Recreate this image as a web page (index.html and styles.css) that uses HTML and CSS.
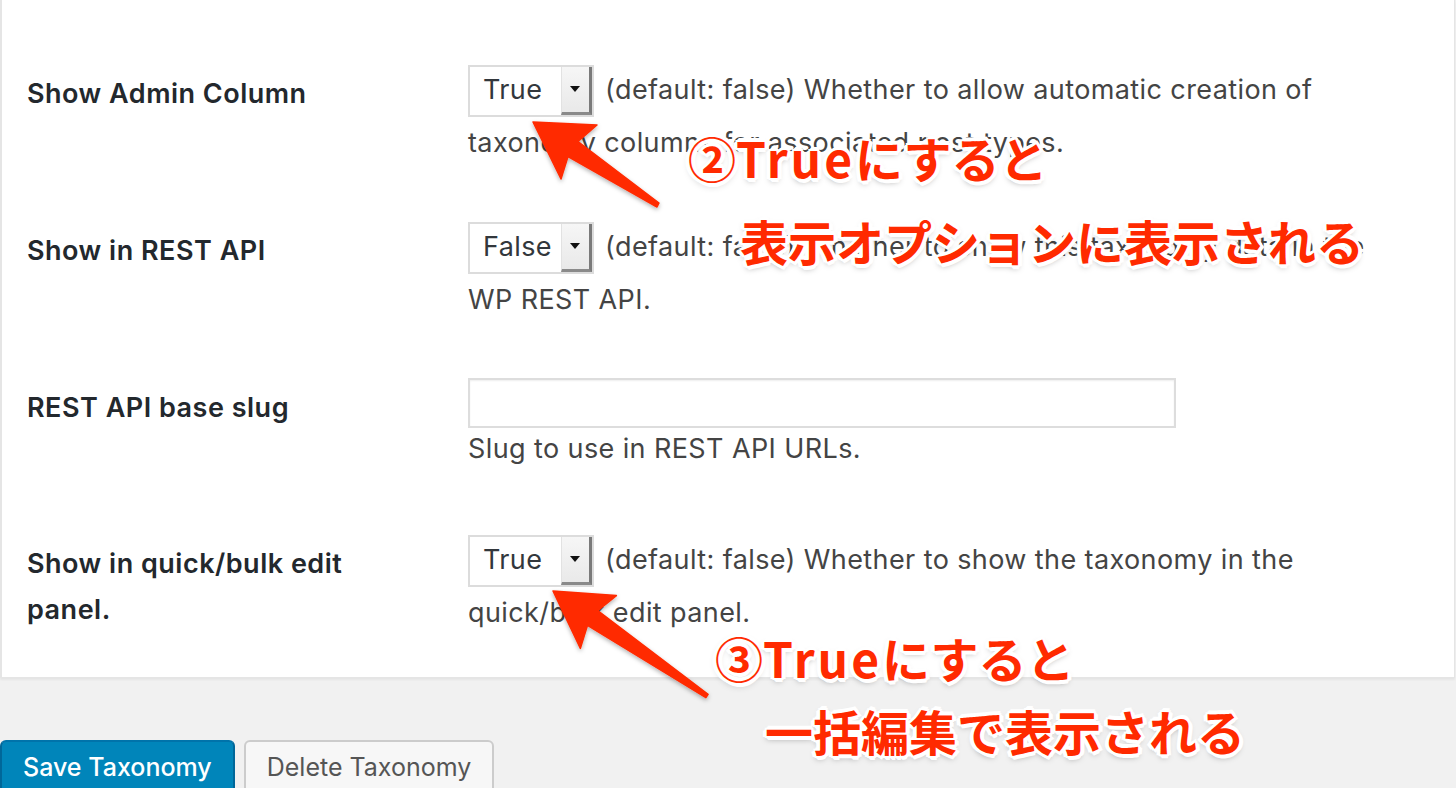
FILE: index.html
```html
<!DOCTYPE html>
<html lang="ja">
<head>
    <meta charset="UTF-8">
    <meta name="viewport" content="width=device-width, initial-scale=1.0">
    <title>Edit Taxonomy</title>
    <link rel="stylesheet" href="styles.css">
</head>
<body>
    <div class="panel">
        <div class="row">
            <div class="label">Show Admin Column</div>
            <div class="field">
                <span class="select"><span class="select-value">True</span><span class="select-btn"></span></span><span class="desc">(default: false) Whether to allow automatic creation of taxonomy columns for associated post types.</span>
            </div>
        </div>
        <div class="row">
            <div class="label">Show in REST API</div>
            <div class="field">
                <span class="select"><span class="select-value">False</span><span class="select-btn"></span></span><span class="desc">(default: false) Whether to show this taxonomy data in the WP REST API.</span>
            </div>
        </div>
        <div class="row">
            <div class="label">REST API base slug</div>
            <div class="field">
                <input type="text" class="text-input">
                <p class="desc slug-desc">Slug to use in REST API URLs.</p>
            </div>
        </div>
        <div class="row">
            <div class="label">Show in quick/bulk edit panel.</div>
            <div class="field">
                <span class="select"><span class="select-value">True</span><span class="select-btn"></span></span><span class="desc">(default: false) Whether to show the taxonomy in the quick/bulk edit panel.</span>
            </div>
        </div>
    </div>

    <div class="actions">
        <button class="btn btn-primary">Save Taxonomy</button>
        <button class="btn">Delete Taxonomy</button>
    </div>

    <!-- 注釈（矢印とテキスト） -->
    <svg class="arrows" width="1456" height="788" viewBox="0 0 1456 788">
        <defs>
            <filter id="arrowShadow" x="-20%" y="-20%" width="140%" height="140%">
                <feDropShadow dx="0" dy="2" stdDeviation="2" flood-color="#000" flood-opacity="0.3"/>
            </filter>
        </defs>
        <polygon filter="url(#arrowShadow)" fill="#ff2a00" stroke="#ff2a00" stroke-width="1.5" stroke-linejoin="round"
            points="533,122 597,125 578,141.5 659,203 657,207 568,156.5 561,179"/>
        <polygon filter="url(#arrowShadow)" fill="#ff2a00" stroke="#ff2a00" stroke-width="1.5" stroke-linejoin="round"
            points="553,591 616.4,595.6 597.7,610.6 708.1,694.3 705.9,697.7 587.5,625.4 580.4,648.4"/>
    </svg>

    <div class="note note-1">②<span class="latin">True</span>にすると</div>
    <div class="note note-2">表示オプションに表示される</div>
    <div class="note note-3">③<span class="latin">True</span>にすると</div>
    <div class="note note-4">一括編集で表示される</div>
</body>
</html>
```

FILE: styles.css
```css
body {
    margin: 0;
    padding: 0;
    background-color: #f1f1f1;
    font-family: Inter, 'Noto Sans', sans-serif;
    color: #444;
    width: 1456px;
    height: 788px;
    overflow: hidden;
    position: relative;
}

.panel {
    width: 1455px;
    box-sizing: border-box;
    height: 678px;
    padding-top: 64px;
    background-color: white;
    border: 1px solid #e5e5e5;
    border-top: none;
    border-left-width: 2px;
    box-shadow: 0 2px 2px rgba(0, 0, 0, 0.05);
}

.row {
    display: grid;
    grid-template-columns: 441px 932px;
    padding: 0 0 52px 25px;
}

.row:last-child {
    padding-bottom: 0;
}

.label {
    margin-top: 7px;
    font-size: 27px;
    letter-spacing: 0.5px;
    font-weight: 600;
    line-height: 46px;
    color: #23282d;
    padding-right: 90px;
}

.field {
    min-height: 104px;
    font-size: 27px;
    letter-spacing: 0.4px;
    line-height: 52px;
}

.select {
    display: inline-flex;
    vertical-align: top;
    width: 126px;
    height: 52px;
    box-sizing: border-box;
    margin-top: 1px;
    margin-right: 11px;
    border: 2px solid #dcdcdc;
    background-color: white;
}

.select-value {
    flex: 1;
    padding-left: 13px;
    line-height: 46px;
    font-size: 27px;
    color: #32373c;
}

.select-btn {
    position: relative;
    width: 27px;
    background: linear-gradient(#f6f6f6, #e9e9e9);
    border-left: 1px solid #e2e2e2;
    border-right: 3px solid #7a7a7a;
    border-bottom: 3px solid #8a8a8a;
}

.select-btn::after {
    content: "";
    position: absolute;
    left: 8px;
    top: 19px;
    border-left: 5px solid transparent;
    border-right: 5px solid transparent;
    border-top: 6px solid #111;
}

.desc {
    color: #444;
}

.text-input {
    display: block;
    width: 708px;
    height: 50px;
    box-sizing: border-box;
    margin: 0;
    border: 2px solid #dddddd;
    box-shadow: inset 0 1px 2px rgba(0, 0, 0, 0.07);
    background-color: white;
}

.slug-desc {
    margin: 0;
    line-height: 42px;
}

.actions {
    display: flex;
    gap: 9px;
    margin-top: 62px;
}

.btn {
    height: 60px;
    padding: 0 21px 6px;
    border-radius: 6px;
    border: 2px solid #cccccc;
    background-color: #f7f7f7;
    color: #555;
    font-family: Inter, 'Noto Sans', sans-serif;
    font-size: 25px;
    cursor: pointer;
}

.btn-primary {
    background-color: #0085ba;
    border-color: #0073aa #006799 #006799;
    color: white;
    font-weight: 500;
}

.arrows {
    position: absolute;
    left: 0;
    top: 0;
    pointer-events: none;
}

.note {
    position: absolute;
    font-family: 'Noto Sans CJK JP', sans-serif;
    font-size: 48px;
    font-weight: 700;
    line-height: 48px;
    color: #ff2a00;
    white-space: nowrap;
    text-shadow:
        3px 0 0 #fff, -3px 0 0 #fff, 0 3px 0 #fff, 0 -3px 0 #fff,
        2px 2px 0 #fff, -2px 2px 0 #fff, 2px -2px 0 #fff, -2px -2px 0 #fff,
        4px 1px 0 #fff, -4px 1px 0 #fff, 1px 4px 0 #fff, 1px -4px 0 #fff,
        0 3px 6px rgba(0, 0, 0, 0.35);
}

.note .latin {
    letter-spacing: 3px;
}

.note-1 {
    left: 688px;
    top: 133px;
}

.note-2 {
    left: 740px;
    top: 216px;
}

.note-3 {
    left: 715px;
    top: 633px;
}

.note-4 {
    left: 765px;
    top: 706px;
}
```
